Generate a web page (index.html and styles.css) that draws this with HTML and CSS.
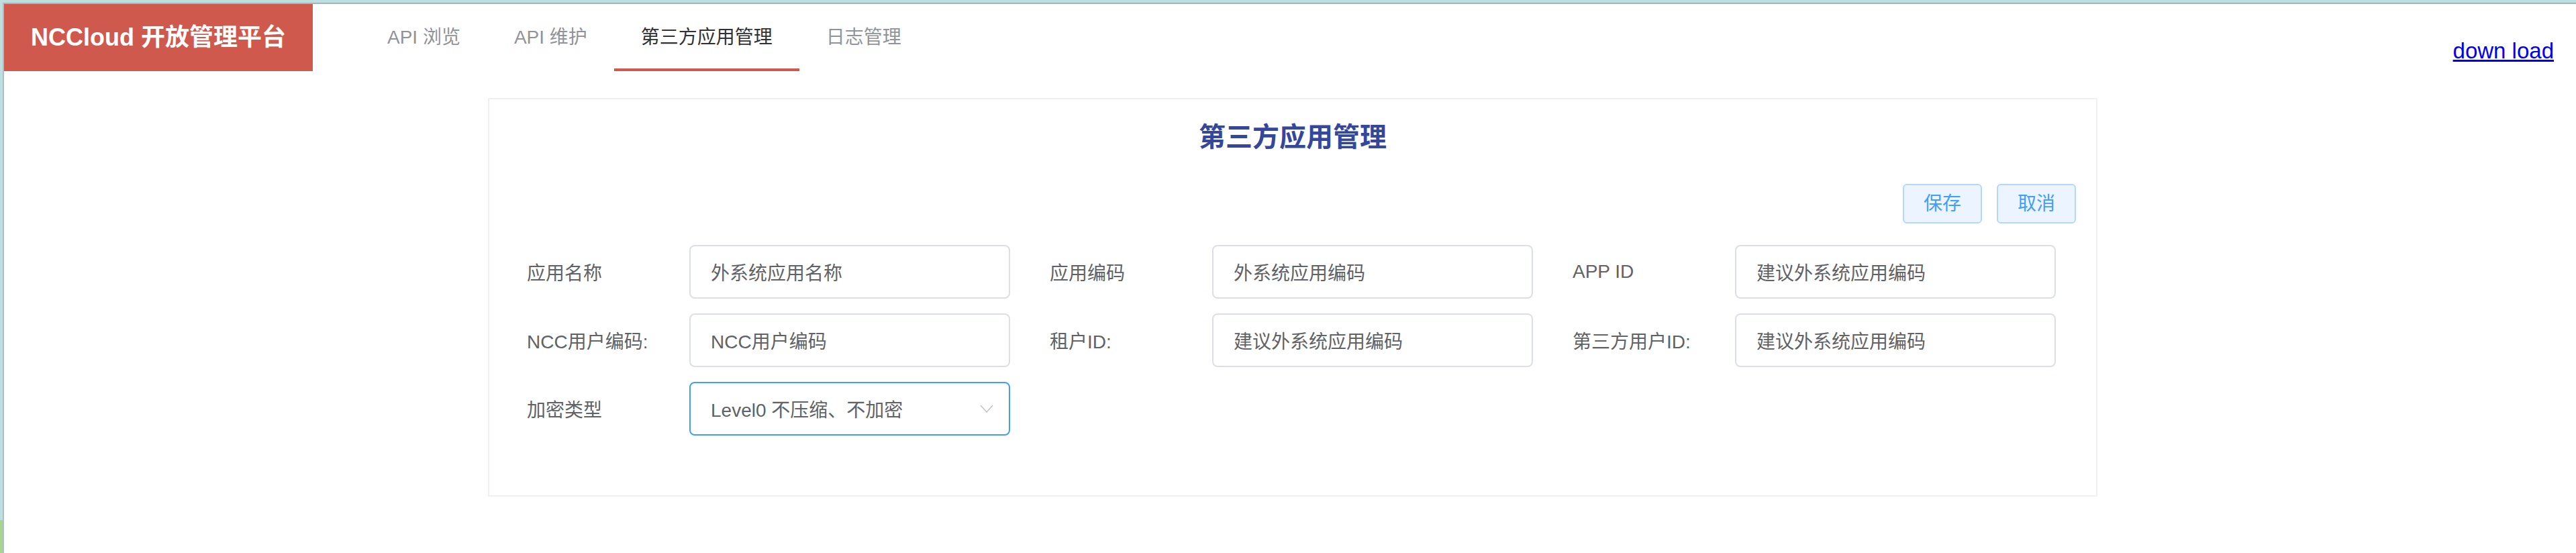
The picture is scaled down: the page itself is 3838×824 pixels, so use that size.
FILE: index.html
```html
<!DOCTYPE html>
<html lang="zh-CN">
<head>
<meta charset="utf-8">
<title>NCCloud 开放管理平台</title>
<link rel="stylesheet" href="styles.css">
</head>
<body>
<div class="desktop">
  <div class="edge-strip"></div>
  <div class="screen">
    <header class="topnav">
      <div class="brand">NCCloud 开放管理平台</div>
      <nav class="tabs">
        <a class="tab">API 浏览</a>
        <a class="tab">API 维护</a>
        <a class="tab active">第三方应用管理</a>
        <a class="tab">日志管理</a>
      </nav>
      <a class="download" href="#">down load</a>
    </header>
    <main class="content">
      <section class="card">
        <h2 class="card-title">第三方应用管理</h2>
        <div class="actions">
          <button class="btn" type="button">保存</button>
          <button class="btn" type="button">取消</button>
        </div>
        <form class="form-grid">
          <div class="field"><label class="label">应用名称</label><input class="control" value="外系统应用名称"></div>
          <div class="field"><label class="label">应用编码</label><input class="control" value="外系统应用编码"></div>
          <div class="field"><label class="label">APP ID</label><input class="control" value="建议外系统应用编码"></div>
          <div class="field"><label class="label">NCC用户编码:</label><input class="control" value="NCC用户编码"></div>
          <div class="field"><label class="label">租户ID:</label><input class="control" value="建议外系统应用编码"></div>
          <div class="field"><label class="label">第三方用户ID:</label><input class="control" value="建议外系统应用编码"></div>
          <div class="field"><label class="label">加密类型</label>
            <div class="control select">
              <span class="select-text">Level0 不压缩、不加密</span>
              <svg class="chevron" width="20" height="12" viewBox="0 0 20 12"><polyline points="1,1 10,11 19,1" fill="none" stroke="#c0c4cc" stroke-width="1.6"/></svg>
            </div>
          </div>
        </form>
      </section>
    </main>
  </div>
</div>
</body>
</html>
```
FILE: styles.css
```css
html, body {
  margin: 0;
  padding: 0;
  background: #ffffff;
}
body {
  font-family: "Liberation Sans", "Noto Sans CJK SC", sans-serif;
  color: #606266;
}
.desktop {
  display: flex;
  min-height: 824px;
  border-top: 4px solid #bddfe1;
  box-sizing: border-box;
}
.edge-strip {
  width: 4px;
  flex: none;
  background: linear-gradient(#bddfe1 0 771px, #a8d48e 771px);
}
.screen {
  flex: 1;
  min-width: 0;
  border-top: 2px solid #a0b8ba;
  border-left: 2px solid #a9c3c5;
  background: #ffffff;
}
.topnav {
  display: flex;
  align-items: flex-start;
  height: 100px;
}
.brand {
  height: 100px;
  line-height: 100px;
  padding: 0 40px;
  background: #cf594d;
  color: #ffffff;
  font-size: 36px;
  font-weight: bold;
  white-space: nowrap;
}
.tabs {
  display: flex;
  margin-left: 71px;
}
.tab {
  display: block;
  height: 100px;
  line-height: 100px;
  padding: 0 40px;
  font-size: 28px;
  color: #909399;
  white-space: nowrap;
}
.tab.active {
  color: #303133;
  box-shadow: inset 0 -4px 0 #cf594d;
}
.download {
  margin-left: auto;
  margin-right: 33px;
  margin-top: 51px;
  font-size: 33px;
  line-height: normal;
  color: #0000ee;
  text-decoration: underline;
}
.content {
  padding: 40px 0 0 8px;
}
.card {
  width: 2398px;
  margin: 0 auto;
  box-sizing: border-box;
  border: 2px solid #f0f0f0;
  padding: 36px 30px 89px;
  background: #ffffff;
}
.card-title {
  margin: 0;
  text-align: center;
  font-size: 40px;
  line-height: 40px;
  font-weight: bold;
  color: #35479b;
}
.actions {
  display: flex;
  justify-content: flex-end;
  gap: 22px;
  margin-top: 50px;
}
.btn {
  font-family: inherit;
  font-size: 28px;
  line-height: 29px;
  padding: 13px 29px;
  border: 2px solid #b3d8ff;
  border-radius: 6px;
  background: #ecf5ff;
  color: #409eff;
}
.form-grid {
  display: grid;
  grid-template-columns: repeat(3, 720px);
  column-gap: 59px;
  row-gap: 22px;
  margin: 32px 30px 0 26px;
}
.field {
  display: flex;
  align-items: center;
  height: 80px;
}
.label {
  width: 242px;
  flex: none;
  font-size: 28px;
  color: #606266;
  white-space: nowrap;
}
.control {
  flex: 1;
  min-width: 0;
  height: 80px;
  box-sizing: border-box;
  border: 2px solid #dcdfe6;
  border-radius: 8px;
  padding: 0 30px;
  font-family: inherit;
  font-size: 28px;
  color: #606266;
  background: #ffffff;
  outline: none;
}
.select {
  display: flex;
  align-items: center;
  justify-content: space-between;
  border-color: #409eff;
  padding-right: 23px;
}
.select-text {
  white-space: nowrap;
}
.chevron {
  display: block;
  flex: none;
}
```
